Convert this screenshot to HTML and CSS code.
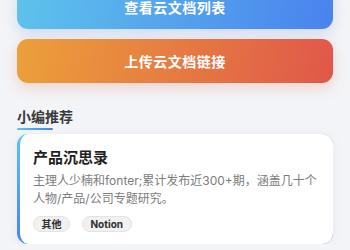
FILE: index.html
```html
<!DOCTYPE html>
<html lang="zh-CN">
<head>
<meta charset="utf-8">
<link rel="stylesheet" href="styles.css">
</head>
<body>
<main class="page">
  <div class="actions">
    <button class="btn btn-blue">查看云文档列表</button>
    <button class="btn btn-orange">上传云文档链接</button>
  </div>
  <section class="section">
    <h2 class="section-title">小编推荐</h2>
    <div class="section-bar"></div>
    <article class="card">
      <h3 class="card-title">产品沉思录</h3>
      <p class="card-desc">主理人少楠和fonter;累计发布近300+期，涵盖几十个人物/产品/公司专题研究。</p>
      <div class="tags">
        <span class="tag">其他</span>
        <span class="tag">Notion</span>
      </div>
    </article>
  </section>
</main>
</body>
</html>
```
FILE: styles.css
```css
* { box-sizing: border-box; }
html, body {
  margin: 0;
  padding: 0;
  background: #f3f4f7;
  font-family: "Inter", "Noto Sans CJK SC", sans-serif;
  overflow: hidden;
}
.page {
  padding: 0 17px;
  margin-top: -15px;
}
.actions {
  display: flex;
  flex-direction: column;
  gap: 10px;
}
.btn {
  height: 44px;
  border: 0;
  border-radius: 11px;
  color: #fff;
  font-family: "Noto Sans CJK SC", sans-serif;
  font-size: 14px;
  font-weight: 700;
  letter-spacing: 0.5px;
  padding: 0;
}
.btn-blue {
  background: linear-gradient(100deg, #5ec3ec 0%, #4a82ee 100%);
  box-shadow: 0 5px 14px rgba(74, 130, 238, 0.22);
}
.btn-orange {
  background: linear-gradient(100deg, #eca03a 0%, #e0574a 100%);
  box-shadow: 0 5px 14px rgba(224, 100, 70, 0.22);
}
.section {
  margin-top: 23px;
}
.section-title {
  margin: 0;
  font-family: "Noto Sans CJK SC", sans-serif;
  font-size: 14px;
  line-height: 20px;
  font-weight: 700;
  color: #3a3a3c;
}
.section-bar {
  width: 36px;
  height: 2px;
  margin-top: 2px;
  border-radius: 1px;
  background: linear-gradient(90deg, #5ec3ec, #4a82ee);
}
.card {
  margin-top: 4px;
  padding: 12px 14px 12px 13px;
  border-radius: 11px;
  border-left: 3px solid transparent;
  background:
    linear-gradient(#fff, #fff) padding-box,
    linear-gradient(180deg, #5ec3ec, #4a82ee) border-box;
  box-shadow: 0 2px 10px rgba(120, 130, 160, 0.10);
}
.card-title {
  margin: 0;
  font-family: "Noto Sans CJK SC", sans-serif;
  font-size: 15px;
  line-height: 22px;
  font-weight: 700;
  color: #1f1f1f;
}
.card-desc {
  margin: 4px 0 0;
  font-size: 12px;
  line-height: 18px;
  color: #7c7c7c;
}
.tags {
  display: flex;
  gap: 12px;
  margin-top: 8px;
}
.tag {
  height: 16px;
  line-height: 14px;
  padding: 0 7.5px;
  border: 1px solid #e3e3e3;
  border-radius: 8px;
  background: #f1f1f1;
  font-size: 10px;
  font-weight: 700;
  color: #2e2e2e;
}
```
